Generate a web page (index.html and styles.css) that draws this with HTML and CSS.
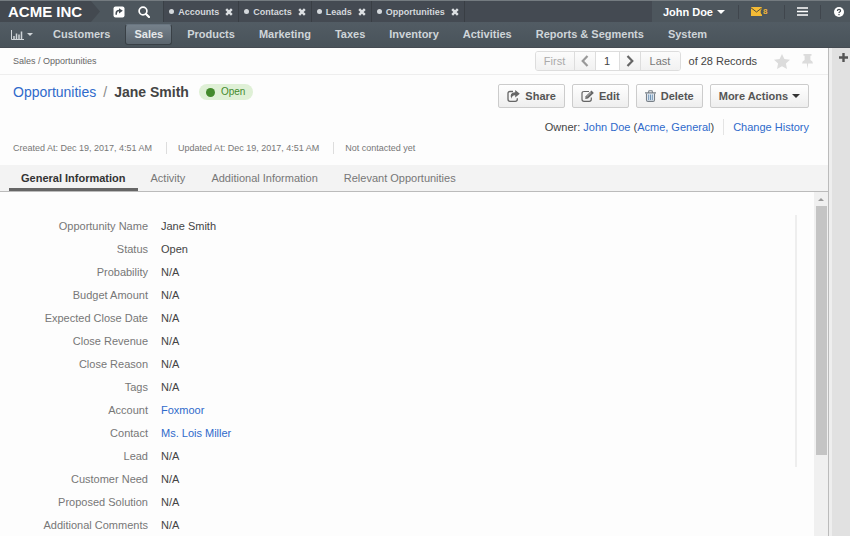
FILE: index.html
```html
<!DOCTYPE html>
<html lang="en">
<head>
<meta charset="utf-8">
<title>Jane Smith - Opportunities</title>
<link rel="stylesheet" href="styles.css">
</head>
<body>
<header class="header">
  <div class="topbar">
    <div class="brand"><a href="#">ACME INC</a><svg class="brand-arrow" viewBox="0 0 10 22" preserveAspectRatio="none" aria-hidden="true"><path d="M0 0L9 11L0 22z"/></svg></div>
    <div class="tools">
      <button type="button" aria-label="Shortcuts"><svg width="12" height="12" viewBox="0 0 12 12"><rect x=".5" y=".5" width="11" height="11" rx="2" fill="#fff"/><path d="M3.2 8.8V7.4Q3.2 4.6 6.2 4.6" fill="none" stroke="#444c53" stroke-width="1.5"/><path d="M6 2.3L9.8 4.8L6 7.4z" fill="#444c53"/></svg></button>
      <button type="button" aria-label="Search"><svg width="12" height="12" viewBox="0 0 12 12"><circle cx="5" cy="5" r="3.9" fill="none" stroke="#fff" stroke-width="1.7"/><path d="M8 8L11 11" stroke="#fff" stroke-width="2.2" stroke-linecap="round"/></svg></button>
    </div>
    <div class="pinned">
      <div class="pin-tab"><i class="dot"></i><a href="#">Accounts</a><button type="button" aria-label="Close Accounts"><svg viewBox="0 0 8 8"><path d="M1.2 1.2L6.8 6.8M6.8 1.2L1.2 6.8"/></svg></button></div>
      <div class="pin-tab"><i class="dot"></i><a href="#">Contacts</a><button type="button" aria-label="Close Contacts"><svg viewBox="0 0 8 8"><path d="M1.2 1.2L6.8 6.8M6.8 1.2L1.2 6.8"/></svg></button></div>
      <div class="pin-tab"><i class="dot"></i><a href="#">Leads</a><button type="button" aria-label="Close Leads"><svg viewBox="0 0 8 8"><path d="M1.2 1.2L6.8 6.8M6.8 1.2L1.2 6.8"/></svg></button></div>
      <div class="pin-tab"><i class="dot"></i><a href="#">Opportunities</a><button type="button" aria-label="Close Opportunities"><svg viewBox="0 0 8 8"><path d="M1.2 1.2L6.8 6.8M6.8 1.2L1.2 6.8"/></svg></button></div>
    </div>
    <div class="user">
      <button type="button" class="user-name">John Doe <i class="caret"></i></button>
      <button type="button" class="mail" aria-label="8 unread emails"><svg width="16" height="11" viewBox="0 0 16 11"><path d="M0 1H11V10H0z" fill="#f5bb35"/><path d="M0 1.8L5.5 6L11 1.8" fill="none" stroke="#59503a" stroke-width="1"/><circle cx="13" cy="5.8" r="3.4" fill="#4d5359"/></svg><span class="count">8</span></button>
      <button type="button" class="menu" aria-label="Menu"><svg width="11" height="9" viewBox="0 0 11 9"><path d="M0 1H11M0 4.5H11M0 8H11" stroke="#fff" stroke-width="1.7"/></svg></button>
      <button type="button" class="help" aria-label="Help"><svg width="10" height="10" viewBox="0 0 10 10"><circle cx="5" cy="5" r="5" fill="#fff"/><path d="M3.4 3.9Q3.4 2.4 5 2.4Q6.6 2.4 6.6 3.8Q6.6 4.6 5.7 5Q5 5.3 5 6" fill="none" stroke="#434a51" stroke-width="1.2"/><rect x="4.4" y="6.9" width="1.2" height="1.3" fill="#434a51"/></svg></button>
    </div>
  </div>
  <nav class="nav">
    <button type="button" class="dash" aria-label="Dashboards"><svg width="13" height="10" viewBox="0 0 13 10"><path d="M.5 0V9.5H13" fill="none" stroke="#cfd4d8"/><path d="M3 9V6M5.5 9V3.5M8 9V4.5M10.5 9V1.5" stroke="#cfd4d8" stroke-width="1.5"/></svg><i class="caret small"></i></button>
    <a href="#">Customers</a>
    <a href="#" class="active">Sales</a>
    <a href="#">Products</a>
    <a href="#">Marketing</a>
    <a href="#">Taxes</a>
    <a href="#">Inventory</a>
    <a href="#">Activities</a>
    <a href="#">Reports &amp; Segments</a>
    <a href="#">System</a>
  </nav>
</header>
<div class="page">
  <main class="main">
    <div class="crumb-row">
      <div class="crumbs">Sales / Opportunities</div>
      <div class="pager">
        <button type="button" class="off">First</button>
        <button type="button" class="off arrow" aria-label="Previous"><svg viewBox="0 0 8 12"><path d="M6.5 1L1.7 6L6.5 11"/></svg></button>
        <input type="text" value="1" aria-label="Record number">
        <button type="button" class="arrow next" aria-label="Next"><svg viewBox="0 0 8 12"><path d="M1.5 1L6.3 6L1.5 11"/></svg></button>
        <button type="button">Last</button>
      </div>
      <div class="total">of 28 Records</div>
      <button type="button" class="mark" aria-label="Favorite"><svg width="16" height="15" viewBox="0 0 16 15"><path d="M8 0L10.4 5L16 5.7L11.9 9.5L13 15L8 12.3L3 15L4.1 9.5L0 5.7L5.6 5z"/></svg></button>
      <button type="button" class="mark" aria-label="Pin"><svg width="11" height="15" viewBox="0 0 11 15"><path d="M1.5 0H9.5V1.8H8.4V6Q11 7.2 11 9.6H6.2L5.5 15L4.8 9.6H0Q0 7.2 2.6 6V1.8H1.5z"/></svg></button>
    </div>
    <div class="title-row">
      <h1><a href="#">Opportunities</a><span class="slash">/</span><b>Jane Smith</b></h1>
      <span class="badge"><i></i>Open</span>
      <div class="actions">
        <button type="button"><svg width="13" height="12" viewBox="0 0 13 12"><path d="M6 1.5H3Q1 1.5 1 3.5V9.3Q1 11.3 3 11.3H8.3Q10.3 11.3 10.3 9.3V8.3" fill="none" stroke="#666" stroke-width="1.3"/><path d="M8.2 0L12.8 3.8L8.2 7.5V5.3Q5 5.1 4.3 8.8Q2 2.5 8.2 2.3z" fill="#666"/></svg>Share</button>
        <button type="button"><svg width="13" height="12" viewBox="0 0 13 12"><path d="M8 1.5H3Q1 1.5 1 3.5V9.3Q1 11.3 3 11.3H8.3Q10.3 11.3 10.3 9.3V7.5" fill="none" stroke="#666" stroke-width="1.2"/><path d="M4.2 9L4.7 6.2L10.5 .6L12.8 2.9L7 8.6z" fill="#666"/><path d="M5.5 6.9L10 2.5" stroke="#ddd" stroke-width=".7"/></svg>Edit</button>
        <button type="button"><svg width="11" height="12" viewBox="0 0 11 12"><path d="M1.5 3.5V10Q1.5 11.4 3 11.4H8Q9.5 11.4 9.5 10V3.5" fill="#e3edf6" stroke="#777f87" stroke-width="1.1"/><path d="M0 2.9H11M3.4 2.6L4 .7H7L7.6 2.6" fill="none" stroke="#777f87" stroke-width="1.1"/><path d="M3.7 4.5V10M5.5 4.5V10M7.3 4.5V10" stroke="#6f93b5"/></svg>Delete</button>
        <button type="button">More Actions<i class="caret dark"></i></button>
      </div>
    </div>
    <div class="owner"><span>Owner: <a href="#">John Doe</a> (<a href="#">Acme, General</a>)</span><a href="#" class="history">Change History</a></div>
    <div class="meta"><span>Created At: Dec 19, 2017, 4:51 AM</span><span>Updated At: Dec 19, 2017, 4:51 AM</span><span>Not contacted yet</span></div>
    <nav class="tabs">
      <a href="#" class="active">General Information</a>
      <a href="#">Activity</a>
      <a href="#">Additional Information</a>
      <a href="#">Relevant Opportunities</a>
    </nav>
    <div class="scroll">
      <section class="details">
        <dl>
          <dt>Opportunity Name</dt><dd>Jane Smith</dd>
          <dt>Status</dt><dd>Open</dd>
          <dt>Probability</dt><dd>N/A</dd>
          <dt>Budget Amount</dt><dd>N/A</dd>
          <dt>Expected Close Date</dt><dd>N/A</dd>
          <dt>Close Revenue</dt><dd>N/A</dd>
          <dt>Close Reason</dt><dd>N/A</dd>
          <dt>Tags</dt><dd>N/A</dd>
          <dt>Account</dt><dd><a href="#">Foxmoor</a></dd>
          <dt>Contact</dt><dd><a href="#">Ms. Lois Miller</a></dd>
          <dt>Lead</dt><dd>N/A</dd>
          <dt>Customer Need</dt><dd>N/A</dd>
          <dt>Proposed Solution</dt><dd>N/A</dd>
          <dt>Additional Comments</dt><dd>N/A</dd>
        </dl>
        <div class="divider"></div>
      </section>
      <div class="scrollbar"><i class="up"></i><div class="thumb"></div></div>
    </div>
  </main>
  <aside class="side"><button type="button" aria-label="Add widget"><svg width="9" height="9" viewBox="0 0 9 9"><path d="M4.5 0V9M0 4.5H9" stroke="#555" stroke-width="2.4"/></svg></button></aside>
</div>
</body>
</html>
```
FILE: styles.css
```css
* { box-sizing: border-box; }
body {
  margin: 0;
  height: 100vh;
  display: flex;
  flex-direction: column;
  overflow: hidden;
  background: #fdfdfd;
  color: #444;
  font: 11px/16px "Liberation Sans", Arial, sans-serif;
}
a { color: #2f6acb; text-decoration: none; }
button, input { font: inherit; color: inherit; margin: 0; padding: 0; border: 0; background: none; }
button { display: flex; align-items: center; justify-content: center; }
svg { display: block; flex: none; }

.header { flex: none; background: #4d565d; border-bottom: 1px solid #454b52; }
.topbar { display: flex; height: 22px; border-top: 1px solid #747b80; background: #434a51; }
.brand { display: flex; align-items: center; background: #434950; padding-left: 8px; }
.brand a { color: #fff; font-size: 15px; font-weight: bold; padding-right: 9px; }
.brand-arrow { width: 10px; height: 100%; background: #4d565d; }
.brand-arrow path { fill: #434950; }
.tools { display: flex; gap: 13px; align-items: center; padding: 0 13px 0 12px; background: #4d565d; }
.pinned { display: flex; flex: 1; border-left: 1px solid #3a4046; background: #444a52; }
.pin-tab { display: flex; align-items: center; padding: 0 5px; border-right: 1px solid #393e44; }
.pin-tab a { color: #d4d8dc; font-size: 9px; font-weight: bold; margin: 0 6px 0 4px; }
.pin-tab svg { width: 8px; height: 8px; stroke: #dde0e3; stroke-width: 2.4; }
.dot { width: 5px; height: 5px; border-radius: 50%; background: #d4d8dc; }
.user { display: flex; align-items: center; background: #4d565d; }
.user button { height: 14px; }
.user-name { color: #fff; font-weight: bold; padding: 0 13px 0 11px; }
.caret { margin-left: 4px; border: 4px solid transparent; border-top-color: #fff; border-bottom: 0; }
.caret.small { border-width: 3px; border-bottom: 0; border-top-color: #cfd4d8; }
.caret.dark { border-top-color: #333; }
.user .mail { border-left: 1px solid #40464d; padding: 0 17px 0 12px; position: relative; }
.count { position: absolute; left: 24px; top: 0; color: #f0b63a; font-size: 8px; line-height: 14px; font-weight: bold; }
.user .menu { border-left: 1px solid #40464d; padding: 0 12px; }
.user .help { border-left: 1px solid #40464d; padding: 0 6px 0 13px; }
.nav { display: flex; align-items: center; gap: 6px; height: 25px; padding-left: 11px; background: linear-gradient(#525c64, #49535a); }
.nav a { height: 21px; line-height: 19px; padding: 0 8px; border: 1px solid transparent; border-radius: 3px; color: #cfd5d9; font-weight: bold; }
.nav a.active { background: linear-gradient(#75818b, #5b656e); border-color: #697580 #394046 #394046; color: #e6e9eb; }
.dash { margin-right: 5px; }
.dash .caret { margin-left: 3px; }

.page { flex: 1; display: flex; min-height: 0; }
.main { flex: 1; min-width: 0; display: flex; flex-direction: column; border-right: 1px solid #bbb; }
.crumb-row { flex: none; display: flex; align-items: center; height: 27px; padding: 0 15px 0 13px; border-bottom: 1px solid #eee; }
.crumbs { flex: 1; font-size: 9px; color: #666; }
.pager { display: flex; height: 20px; border: 1px solid #ddd; border-radius: 3px; overflow: hidden; }
.pager button { width: 39px; background: linear-gradient(#fcfcfc, #f1f1f1); color: #777; border-right: 1px solid #ddd; }
.pager button:last-child { border-right: 0; }
.pager .off { color: #aaa; }
.pager .arrow { width: 21px; }
.pager svg { width: 8px; height: 12px; fill: none; stroke: #999; stroke-width: 2.2; }
.pager .next svg { stroke: #666; }
.pager input { width: 24px; text-align: center; background: #fff; border-right: 1px solid #ddd; }
.total { margin: 0 17px 0 8px; }
.mark { fill: #dcdcdc; }
.mark + .mark { margin-left: 12px; }
.title-row { flex: none; display: flex; align-items: flex-start; padding: 9px 19px 0 13px; }
h1 { margin: 0; font-size: 14px; font-weight: normal; white-space: nowrap; }
.slash { color: #888; margin: 0 7px; }
.badge { display: flex; align-items: center; margin-left: 10px; padding: 0 8px 0 7px; border-radius: 8px; background: #dff0d6; color: #438a2c; font-size: 10px; }
.badge i { width: 9px; height: 9px; border-radius: 50%; background: #438a2c; margin-right: 6px; }
.actions { margin-left: auto; display: flex; gap: 7px; }
.actions button { height: 24px; padding: 0 8px; border: 1px solid #ccc; border-radius: 2px; background: linear-gradient(#fff, #eee); color: #555; font-weight: bold; }
.actions svg { margin-right: 5px; }
.owner { flex: none; display: flex; justify-content: flex-end; padding: 11px 19px 0 0; }
.history { margin-left: 9px; padding-left: 9px; border-left: 1px solid #e4e4e4; }
.meta { flex: none; display: flex; padding: 7px 13px 11px; font-size: 9px; line-height: 12px; color: #777; }
.meta span { padding-right: 14px; }
.meta span + span { padding-left: 11px; border-left: 1px solid #ddd; }
.tabs { flex: none; display: flex; height: 27px; padding-left: 9px; background: #f3f3f3; border-bottom: 1px solid #bbb; }
.tabs a { padding: 0 13px; line-height: 26px; color: #777; }
.tabs .active { color: #333; font-weight: bold; border-bottom: 3px solid #666; padding: 0 12px; }
.scroll { flex: 1; display: flex; min-height: 0; overflow: hidden; }
.details { flex: 1; display: flex; justify-content: space-between; padding: 23px 17px 0 13px; }
dl { display: grid; grid-template-columns: 135px 1fr; column-gap: 13px; align-content: start; margin: 0; line-height: 23px; }
dt { text-align: right; color: #777; }
dd { margin: 0; }
.divider { width: 2px; height: 252px; background: #eee; }
.scrollbar { width: 14px; background: #f0f0f0; display: flex; flex-direction: column; align-items: center; }
.up { margin: 6px 0 5px; border: 3px solid transparent; border-bottom-color: #999; border-top: 0; }
.thumb { width: 11px; height: 249px; background: #c4c4c4; }
.side { width: 21px; border-left: 3px solid #eee; background: #e1e1e1; }
.side button { margin: 5px 0 0 7px; }
```
